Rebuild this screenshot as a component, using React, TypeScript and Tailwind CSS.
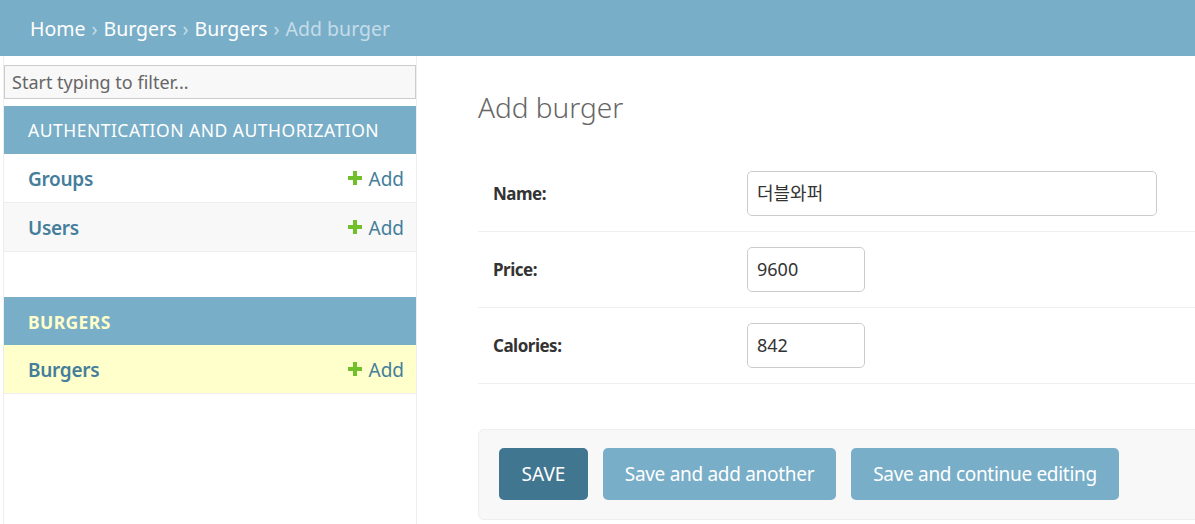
const font = { fontFamily: '"Noto Sans", "Noto Sans CJK KR", sans-serif' };

function AddLink() {
  return (
    <span className="flex items-center gap-[6px] text-[#447e9b] text-[19px]">
      <svg width="14" height="14" viewBox="0 0 14 14" className="mt-[-2px]">
        <path d="M5 0h4v5h5v4H9v5H5V9H0V5h5z" fill="#70bf2b" />
      </svg>
      Add
    </span>
  );
}

function ModuleRow({ name, bg }: { name: string; bg: string }) {
  return (
    <div className={`flex items-center justify-between h-[49px] pt-[2px] pl-[24px] pr-[12px] border-b border-[#eee] ${bg}`}>
      <span className="text-[19px] font-semibold text-[#447e9b] tracking-[-0.3px]">{name}</span>
      <AddLink />
    </div>
  );
}

function FormRow({ label, value, wide }: { label: string; value: string; wide?: boolean }) {
  return (
    <div className="flex items-center h-[76px] border-b border-[#eee] pl-[15px]">
      <label className="w-[254px] text-[17px] font-bold text-[#333] tracking-[-0.5px]">{label}</label>
      <div
        className={`h-[45px] flex items-center px-[9px] border border-[#ccc] rounded-[5px] text-[18px] text-[#333] ${
          wide ? 'w-[410px]' : 'w-[118px]'
        }`}
      >
        {value}
      </div>
    </div>
  );
}

export default function App() {
  return (
    <div className="w-[1195px] h-[524px] overflow-hidden flex flex-col bg-white" style={font}>
      <div className="h-[56px] shrink-0 bg-[#79aec8] flex items-center pt-[2px] px-[30px] text-[19.5px] text-white">
        <span>Home</span>
        <span className="mx-[6px] text-[#c4dce8]">›</span>
        <span>Burgers</span>
        <span className="mx-[6px] text-[#c4dce8]">›</span>
        <span>Burgers</span>
        <span className="mx-[6px] text-[#c4dce8]">›</span>
        <span className="text-[#c4dce8]">Add burger</span>
      </div>
      <div className="flex flex-1 min-h-0">
        <div className="ml-[3px] w-[414px] shrink-0 border-l border-r border-[#eee] flex flex-col">
          <div className="mt-[9px] h-[34px] border border-[#ccc] bg-[#f8f8f8] flex items-center px-[7px] text-[18px] text-[#666]">
            Start typing to filter...
          </div>
          <div className="mt-[7px] h-[48px] bg-[#79aec8] flex items-center pl-[24px] text-[17.5px] text-white tracking-[0.5px]">
            AUTHENTICATION AND AUTHORIZATION
          </div>
          <ModuleRow name="Groups" bg="bg-white" />
          <ModuleRow name="Users" bg="bg-[#f8f8f8]" />
          <div className="mt-[45px] h-[48px] bg-[#79aec8] flex items-center pt-[2px] pl-[24px] text-[17.5px] font-bold text-[#ffc] tracking-[0.4px]">
            BURGERS
          </div>
          <ModuleRow name="Burgers" bg="bg-[#ffc]" />
        </div>
        <div className="flex-1 pl-[61px] mr-[-20px] flex flex-col">
          <h1 className="mt-[30px] h-[70px] text-[28px] font-light text-[#666]">Add burger</h1>
          <FormRow label="Name:" value="더블와퍼" wide />
          <FormRow label="Price:" value="9600" />
          <FormRow label="Calories:" value="842" />
          <div className="mt-[45px] border border-[#eee] rounded-[6px] bg-[#f8f8f8] flex gap-[15px] pl-[20px] pt-[18px] pb-[19px]">
            <div className="w-[89px] h-[52px] rounded-[5px] bg-[#417690] text-white text-[19px] flex items-center justify-center">
              SAVE
            </div>
            <div className="w-[233px] h-[52px] rounded-[5px] bg-[#79aec8] text-white text-[19px] tracking-[-0.3px] flex items-center justify-center">
              Save and add another
            </div>
            <div className="w-[268px] h-[52px] rounded-[5px] bg-[#79aec8] text-white text-[19px] tracking-[-0.3px] flex items-center justify-center">
              Save and continue editing
            </div>
          </div>
        </div>
      </div>
    </div>
  );
}
